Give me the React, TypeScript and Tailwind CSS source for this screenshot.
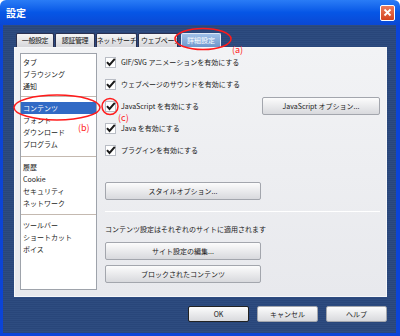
import React from "react";

const Check = () => (
  <svg width="11" height="11" viewBox="0 0 11 11" className="shrink-0">
    <rect x="0.5" y="0.5" width="10" height="10" fill="#fff" stroke="#b8bcc4" />
    <path d="M2 5.2 L4.5 8 L9.8 1.8" fill="none" stroke="#1a1a1a" strokeWidth="2" />
  </svg>
);

const Btn = ({ children, className = "" }: { children: React.ReactNode; className?: string }) => (
  <div
    className={
      "flex items-center justify-center h-[18px] border border-[#a3a6ad] rounded-[2px] bg-gradient-to-b from-[#fcfcfc] to-[#d8d9dd] text-[7px] text-[#222] " +
      className
    }
  >
    {children}
  </div>
);

const Row = ({ label, children }: { label: string; children?: React.ReactNode }) => (
  <div className="h-[22px] flex items-center">
    <Check />
    <span className="ml-[5px] text-[7px] text-[#1a1a1a]">{label}</span>
    {children}
  </div>
);

const groups = [
  ["タブ", "ブラウジング", "通知"],
  ["コンテンツ", "フォント", "ダウンロード", "プログラム"],
  ["履歴", "Cookie", "セキュリティ", "ネットワーク"],
  ["ツールバー", "ショートカット", "ボイス"],
];

const tabs = [
  { name: "一般設定", w: "w-[38px] justify-center" },
  { name: "認証管理", w: "w-[40px] justify-center" },
  { name: "ネットサーチ", w: "w-[41px] justify-center" },
  { name: "ウェブページ", w: "w-[40px] justify-start pl-[2px]" },
];

export default function App() {
  return (
    <div className="relative w-[400px] h-[336px] flex flex-col overflow-hidden font-['Noto_Sans_CJK_JP',sans-serif]">
      {/* title bar */}
      <div className="h-[25px] shrink-0 flex items-center justify-between pl-[6px] pr-[5px] bg-gradient-to-b from-[#2a7cf6] via-[#0656e6] to-[#0a48d4] rounded-t-[6px]">
        <span className="text-white text-[10px] font-bold">設定</span>
        <div className="w-[15px] h-[16px] rounded-[2px] border border-white bg-gradient-to-b from-[#ec7a5a] to-[#d3421e] flex items-center justify-center">
          <svg width="9" height="9" viewBox="0 0 9 9">
            <path d="M1.5 1.5 L7.5 7.5 M7.5 1.5 L1.5 7.5" stroke="#fff" strokeWidth="1.8" />
          </svg>
        </div>
      </div>

      {/* body */}
      <div className="flex-1 flex flex-col border-l-[3px] border-r-[4px] border-b-[3px] border-[#0b44d8] bg-[repeating-linear-gradient(0deg,#29467a_0px,#29467a_1px,#2e4c80_1px,#2e4c80_2px)] pt-[8px] pl-[11px]">
        {/* tabs */}
        <div className="flex gap-[1px] pl-[2px] h-[14px]">
          {tabs.map((t) => (
            <div
              key={t.name}
              className={
                t.w +
                " h-[14px] border border-b-0 border-[#2b3150] rounded-t-[2px] bg-gradient-to-b from-[#f6f6f6] to-[#d6d7db] text-[7px] tracking-[-0.4px] text-[#111] flex items-center overflow-hidden whitespace-nowrap"
              }
            >
              {t.name}
            </div>
          ))}
          <div className="ml-[2px] w-[40px] h-[14px] border border-b-0 border-[#dfe8f5] rounded-t-[2px] bg-gradient-to-b from-[#9fc0e8] to-[#6f98cc] text-[7px] text-white flex items-center justify-center whitespace-nowrap">
            詳細設定
          </div>
        </div>

        {/* panel */}
        <div className="w-[373px] h-[250px] border border-[#f6f7f9] bg-gradient-to-b from-[#f2f3f5] to-[#e8e9ed] flex pl-[5px] pr-[6px] pt-[3px]">
          {/* list */}
          <div className="mt-[2px] w-[77px] h-[237px] bg-white border border-[#9ea3ab] flex flex-col">
            {groups.map((g, gi) => (
              <div
                key={gi}
                className={
                  (gi === 0 ? "pt-[2px] pb-[4px]" : gi === 1 ? "pt-[5px] pb-[6px]" : gi === 2 ? "pt-[4px] pb-[5px]" : "pt-[4px]") +
                  (gi < 3 ? " border-b border-[#c4b9b0]" : "")
                }
              >
                {g.map((it) => (
                  <div
                    key={it}
                    className={
                      "h-[12px] flex items-center px-[2px] text-[7px] " +
                      (it === "コンテンツ" ? "bg-[#316ac5] text-white" : "text-[#1a1a1a]")
                    }
                  >
                    {it}
                  </div>
                ))}
              </div>
            ))}
          </div>

          {/* content */}
          <div className="ml-[8px] flex-1 flex flex-col">
            <Row label="GIF/SVG アニメーションを有効にする" />
            <Row label="ウェブページのサウンドを有効にする" />
            <Row label="JavaScript を有効にする">
              <Btn className="ml-auto w-[118px]">JavaScript オプション...</Btn>
            </Row>
            <Row label="Java を有効にする" />
            <Row label="プラグインを有効にする" />
            <Btn className="mt-[21px] w-[156px]">スタイルオプション...</Btn>
            <div className="mt-[11px] h-px bg-[#cfd1d6] border-b border-white" />
            <div className="mt-[12px] h-[10px] flex items-center text-[7px] text-[#1a1a1a]">
              コンテンツ設定はそれぞれのサイトに適用されます
            </div>
            <Btn className="mt-[8px] w-[156px]">サイト設定の編集...</Btn>
            <Btn className="mt-[5px] w-[156px]">ブロックされたコンテンツ</Btn>
          </div>
        </div>

        {/* bottom buttons */}
        <div className="mt-[9px] w-[373px] flex justify-end gap-[8px]">
          <Btn className="!h-[16px] w-[61px] !border-[#222]">OK</Btn>
          <Btn className="!h-[16px] w-[61px]">キャンセル</Btn>
          <Btn className="!h-[16px] w-[61px]">ヘルプ</Btn>
        </div>
      </div>

      {/* annotations */}
      <svg className="absolute left-0 top-0 pointer-events-none" width="400" height="336">
        <ellipse cx="203" cy="39" rx="28" ry="10.5" fill="none" stroke="#ff1a1a" strokeWidth="1.5" />
        <ellipse cx="57" cy="107.5" rx="43" ry="12.5" fill="none" stroke="#ff1a1a" strokeWidth="1.5" />
        <circle cx="110" cy="106.5" r="8" fill="none" stroke="#ff1a1a" strokeWidth="1.5" />
      </svg>
      <span className="absolute left-[232px] top-[45px] text-[9px] leading-[10px] text-[#ff1a1a]">(a)</span>
      <span className="absolute left-[78px] top-[123px] text-[9px] leading-[10px] text-[#ff1a1a]">(b)</span>
      <span className="absolute left-[118px] top-[113px] text-[9px] leading-[10px] text-[#ff1a1a]">(c)</span>
    </div>
  );
}
